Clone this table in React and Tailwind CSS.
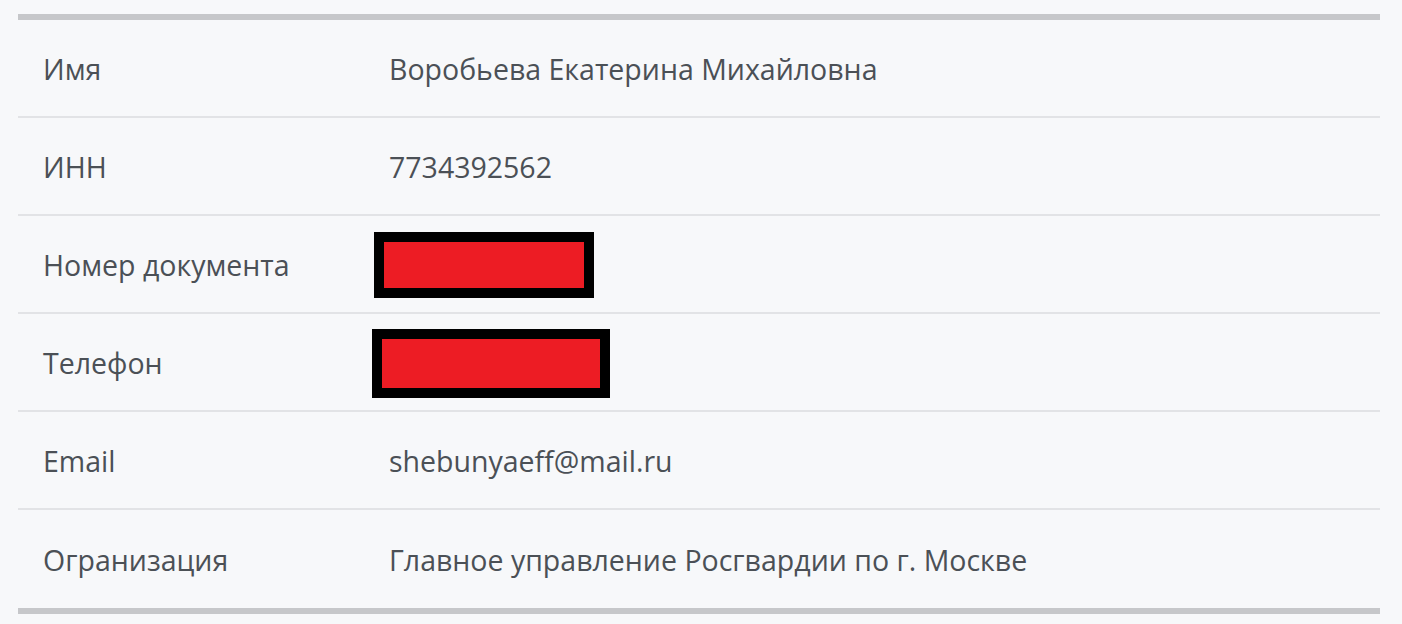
import React from 'react';

const rows = [
  { label: 'Имя', value: 'Воробьева Екатерина Михайловна' },
  { label: 'ИНН', value: '7734392562' },
  { label: 'Номер документа', redacted: 'doc' },
  { label: 'Телефон', redacted: 'phone' },
  { label: 'Email', value: 'shebunyaeff@mail.ru' },
  { label: 'Огранизация', value: 'Главное управление Росгвардии по г. Москве' },
];

const Redacted = ({ kind }) =>
  kind === 'doc' ? (
    <div className="ml-[-15px] w-[220px] h-[66px] bg-[#ed1c24] border-[10px] border-black" />
  ) : (
    <div className="ml-[-17px] w-[238px] h-[69px] bg-[#ed1c24] border-[10px] border-black" />
  );

export default function App() {
  return (
    <div className="w-[1402px] h-[624px] bg-[#f7f8fa] pt-[14px] pl-[18px] pr-[22px] font-['Open_Sans',sans-serif] text-[#4b5056]">
      <div className="border-t-[6px] border-b-[6px] border-[#c6c7ca]">
        {rows.map((row, i) => (
          <div
            key={row.label}
            className={`flex items-center h-[98px] ${i < rows.length - 1 ? 'border-b-2 border-[#e2e3e6]' : ''}`}
          >
            <div className="w-[371px] pl-[25px] text-[28.5px] leading-none pt-[2px]">{row.label}</div>
            <div className="flex-1 text-[28.5px] leading-none pt-[2px]">
              {row.redacted ? <Redacted kind={row.redacted} /> : row.value}
            </div>
          </div>
        ))}
      </div>
    </div>
  );
}
